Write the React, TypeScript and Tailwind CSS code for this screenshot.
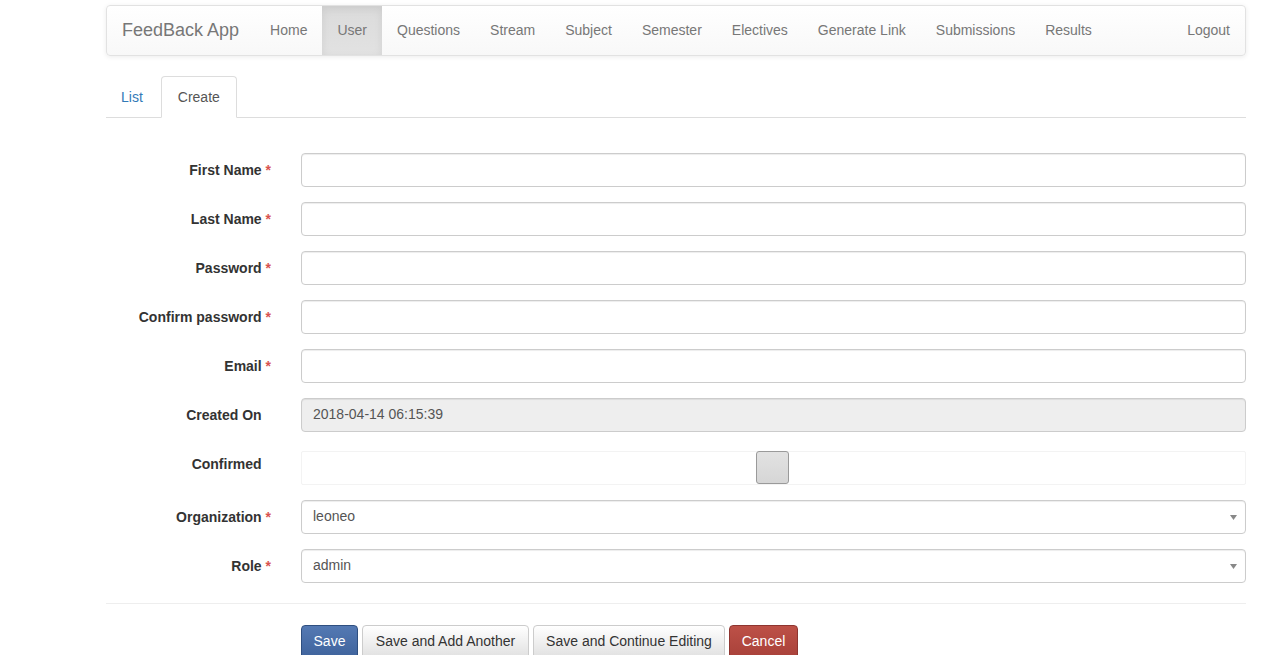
import React from "react";

const navItems = ["Home", "User", "Questions", "Stream", "Subject", "Semester", "Electives", "Generate Link", "Submissions", "Results"];

function Label({ text, req = true }: { text: string; req?: boolean }) {
  return (
    <div className="w-[195px] shrink-0 px-[15px] pt-[7px] text-right font-bold text-[#333] leading-[20px]">
      {text}
      <span className={req ? "text-[#d9534f]" : "invisible"}>&nbsp;*</span>
    </div>
  );
}

function Row({ children, className = "" }: { children: React.ReactNode; className?: string }) {
  return <div className={"flex mx-[-15px] mb-[15px] " + className}>{children}</div>;
}

function TextInput({ value = "", disabled = false }: { value?: string; disabled?: boolean }) {
  return (
    <div className="flex-1 px-[15px]">
      <div
        className={
          "h-[34px] rounded-[4px] border border-[#ccc] pl-[11px] pr-[12px] pb-[2px] flex items-center text-[#555] shadow-[inset_0_1px_1px_rgba(0,0,0,0.075)] " +
          (disabled ? "bg-[#eee]" : "bg-white")
        }
      >
        {value}
      </div>
    </div>
  );
}

function SelectInput({ value }: { value: string }) {
  return (
    <div className="flex-1 px-[15px]">
      <div className="h-[34px] rounded-[4px] border border-[#ccc] bg-white pl-[11px] pr-[6px] flex items-center justify-between text-[#555] shadow-[inset_0_1px_1px_rgba(0,0,0,0.075)]">
        <span className="mt-[-2px]">{value}</span>
        <svg width="7" height="5" viewBox="0 0 7 5" className="mr-[2px] mt-[1px]">
          <path d="M0 0 L7 0 L3.5 5 Z" fill="#888" />
        </svg>
      </div>
    </div>
  );
}

export default function App() {
  return (
    <div className="min-h-screen bg-white text-[14px] text-[#333] leading-[20px] font-['Liberation_Sans',Arial,sans-serif]">
      <div className="w-[1140px] ml-[106px] pt-[5px]">
        {/* Navbar */}
        <div className="h-[51px] flex items-stretch rounded-[4px] border border-[#e2e2e2] bg-gradient-to-b from-white to-[#f8f8f8] shadow-[0_1px_5px_rgba(0,0,0,0.08),inset_0_1px_0_rgba(255,255,255,0.15)]">
          <div className="pl-[15px] pr-[16px] pb-[2px] flex items-center text-[18px] text-[#777]">FeedBack App</div>
          {navItems.map((n) => (
            <div
              key={n}
              className={
                "px-[15px] pb-[2px] flex items-center text-[#777] " +
                (n === "User" ? "bg-gradient-to-b from-[#dbdbdb] to-[#e2e2e2] text-[#555] shadow-[inset_0_3px_9px_rgba(0,0,0,0.075)]" : "")
              }
            >
              {n}
            </div>
          ))}
          <div className="ml-auto px-[15px] pb-[2px] flex items-center text-[#777]">Logout</div>
        </div>

        {/* Tabs */}
        <div className="mt-[20px] flex border-b border-[#ddd] h-[42px]">
          <div className="px-[15px] pb-[1px] flex items-center text-[#337ab7] mr-[3px] h-[42px]">List</div>
          <div className="pl-[16px] pr-[16px] pb-[1px] flex items-center text-[#555] h-[42px] border border-[#ddd] border-b-white bg-white rounded-t-[4px] mb-[-1px]">
            Create
          </div>
        </div>

        {/* Form */}
        <div className="mt-[35px]">
          <Row>
            <Label text="First Name" />
            <TextInput />
          </Row>
          <Row>
            <Label text="Last Name" />
            <TextInput />
          </Row>
          <Row>
            <Label text="Password" />
            <TextInput />
          </Row>
          <Row>
            <Label text="Confirm password" />
            <TextInput />
          </Row>
          <Row>
            <Label text="Email" />
            <TextInput />
          </Row>
          <Row>
            <Label text="Created On" req={false} />
            <TextInput value="2018-04-14 06:15:39" disabled />
          </Row>
          <Row>
            <Label text="Confirmed" req={false} />
            <div className="flex-1 px-[15px] pt-[4px]">
              <div className="h-[34px] border border-[#f3f3f3] rounded-[2px] flex items-center justify-center">
                <div className="w-[33px] h-[33px] mt-[-1px] ml-[-2px] rounded-[3px] border border-[#9a9a9a] bg-gradient-to-b from-[#e2e2e2] to-[#d6d6d6]" />
              </div>
            </div>
          </Row>
          <Row>
            <Label text="Organization" />
            <SelectInput value="leoneo" />
          </Row>
          <Row className="mb-0">
            <Label text="Role" />
            <SelectInput value="admin" />
          </Row>
        </div>

        <div className="mt-[20px] border-t border-[#eee]" />

        <div className="mt-[21px] pl-[195px] flex gap-[4px]">
          <button className="h-[34px] w-[57px] flex items-center justify-center pb-[2px] rounded-[4px] border border-[#2f4f80] text-white bg-gradient-to-b from-[#5479b3] to-[#3f639c]">
            Save
          </button>
          <button className="h-[34px] w-[167px] flex items-center justify-center pb-[2px] rounded-[4px] border border-[#ccc] text-[#333] bg-gradient-to-b from-white to-[#e0e0e0]">
            Save and Add Another
          </button>
          <button className="h-[34px] w-[192px] flex items-center justify-center pb-[2px] rounded-[4px] border border-[#ccc] text-[#333] bg-gradient-to-b from-white to-[#e0e0e0]">
            Save and Continue Editing
          </button>
          <button className="h-[34px] w-[69px] flex items-center justify-center pb-[2px] rounded-[4px] border border-[#8e3530] text-white bg-gradient-to-b from-[#bd5147] to-[#a8413a]">
            Cancel
          </button>
        </div>
      </div>
    </div>
  );
}
